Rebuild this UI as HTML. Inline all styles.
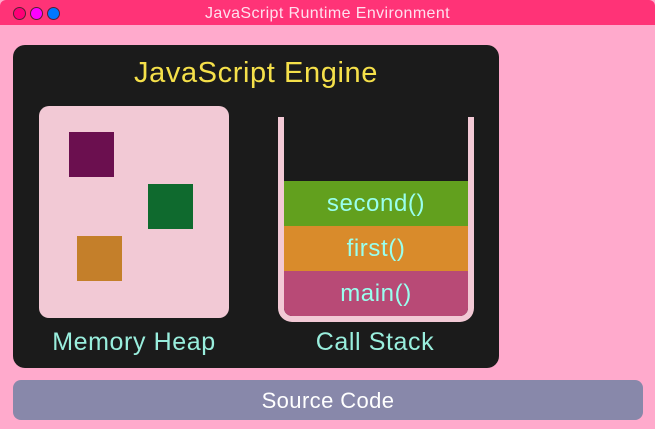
<!DOCTYPE html>
<html><head><style>
*{margin:0;padding:0;box-sizing:border-box}
body{width:655px;height:429px;background:#ffaacc;font-family:"Liberation Sans",sans-serif;position:relative;overflow:hidden}
.t{position:absolute;left:0;top:0;width:655px;height:25px;background:#ff3377;border-radius:6px 6px 0 0;color:#ffe0ee;font-size:16px;text-align:center;line-height:27px;letter-spacing:0.4px}
.d{position:absolute;top:7px;width:13px;height:13px;border-radius:50%;border:1px solid #552233}
.e{position:absolute;left:13px;top:45px;width:486px;height:323px;background:#1b1b1b;border-radius:12px}
.a{position:absolute;color:#f5e04a;font-size:29px;left:0;width:486px;text-align:center;top:12px;letter-spacing:0.6px}
.h{position:absolute;left:26px;top:61px;width:190px;height:212px;background:#f2c9d5;border-radius:10px}
.s{position:absolute;width:45px;height:45px}
.c{position:absolute;left:265px;top:72px;width:196px;height:205px;border:6px solid #f2c9d5;border-top:none;border-radius:0 0 14px 14px;overflow:hidden}
.r{height:45px;color:#99ffee;font-size:24px;text-align:center;line-height:46px;letter-spacing:0.6px}
.l{position:absolute;top:283px;color:#99eedd;font-size:25px;text-align:center;letter-spacing:0.6px}
.b{position:absolute;left:13px;top:380px;width:630px;height:40px;background:#8888aa;border-radius:8px;color:#fff;font-size:22px;text-align:center;line-height:42px;letter-spacing:0.4px}
</style></head><body>
<div class="t">JavaScript Runtime Environment</div>
<div class="d" style="left:13px;background:#ff0077"></div>
<div class="d" style="left:30px;background:#ff00ff"></div>
<div class="d" style="left:47px;background:#0077ff"></div>
<div class="e">
<div class="a">JavaScript Engine</div>
<div class="h">
<div class="s" style="left:30px;top:26px;background:#6b0f4f"></div>
<div class="s" style="left:109px;top:78px;background:#0f6a2e"></div>
<div class="s" style="left:38px;top:130px;background:#c47f2a"></div>
</div>
<div class="c"><div style="height:64px"></div>
<div class="r" style="background:#62a01e">second()</div>
<div class="r" style="background:#d98b2b">first()</div>
<div class="r" style="background:#b84a76">main()</div>
</div>
<div class="l" style="left:21px;width:200px">Memory Heap</div>
<div class="l" style="left:262px;width:200px">Call Stack</div>
</div>
<div class="b">Source Code</div>
</body></html>
